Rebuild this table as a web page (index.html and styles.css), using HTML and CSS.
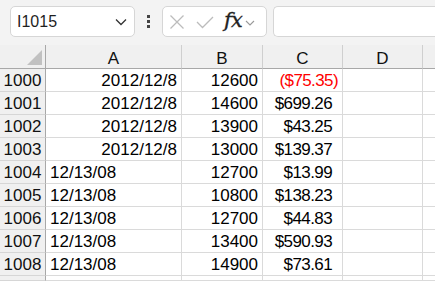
FILE: index.html
```html
<!DOCTYPE html>
<html>
<head>
<meta charset="utf-8">
<link rel="stylesheet" href="styles.css">
</head>
<body>
<div class="toolbar">
  <div class="namebox">
    <span class="name">I1015</span>
    <svg class="chev" width="12" height="8" viewBox="0 0 12 8"><path d="M1 1.5 L6 6.5 L11 1.5" fill="none" stroke="#333" stroke-width="1.3"/></svg>
  </div>
  <div class="dots"><span></span><span></span><span></span></div>
  <div class="fbox">
    <svg class="ico" width="16" height="16" viewBox="0 0 16 16"><path d="M1.5 1.5 L14.5 14.5 M14.5 1.5 L1.5 14.5" stroke="#bcbcbc" stroke-width="1.3" fill="none"/></svg>
    <svg class="ico" width="18" height="14" viewBox="0 0 18 14"><path d="M1 7 L6.5 12.5 L17 2" stroke="#bcbcbc" stroke-width="1.3" fill="none"/></svg>
    <span class="fx">fx</span>
    <svg class="chev2" width="10" height="6" viewBox="0 0 10 6"><path d="M1 1 L5 5 L9 1" fill="none" stroke="#999" stroke-width="1.1"/></svg>
  </div>
  <div class="finput"></div>
</div>
<div class="sheet">
  <div class="ch corner"><div class="tri"></div></div>
  <div class="ch">A</div><div class="ch">B</div><div class="ch">C</div><div class="ch">D</div><div class="ch last"></div>

  <div class="rh">1000</div><div class="c r">2012/12/8</div><div class="c r">12600</div><div class="c r cur neg">($75.35)</div><div class="c"></div><div class="c last"></div>
  <div class="rh">1001</div><div class="c r">2012/12/8</div><div class="c r">14600</div><div class="c r cur">$699.26</div><div class="c"></div><div class="c last"></div>
  <div class="rh">1002</div><div class="c r">2012/12/8</div><div class="c r">13900</div><div class="c r cur">$43.25</div><div class="c"></div><div class="c last"></div>
  <div class="rh">1003</div><div class="c r">2012/12/8</div><div class="c r">13000</div><div class="c r cur">$139.37</div><div class="c"></div><div class="c last"></div>
  <div class="rh">1004</div><div class="c">12/13/08</div><div class="c r">12700</div><div class="c r cur">$13.99</div><div class="c"></div><div class="c last"></div>
  <div class="rh">1005</div><div class="c">12/13/08</div><div class="c r">10800</div><div class="c r cur">$138.23</div><div class="c"></div><div class="c last"></div>
  <div class="rh">1006</div><div class="c">12/13/08</div><div class="c r">12700</div><div class="c r cur">$44.83</div><div class="c"></div><div class="c last"></div>
  <div class="rh">1007</div><div class="c">12/13/08</div><div class="c r">13400</div><div class="c r cur">$590.93</div><div class="c"></div><div class="c last"></div>
  <div class="rh">1008</div><div class="c">12/13/08</div><div class="c r">14900</div><div class="c r cur">$73.61</div><div class="c"></div><div class="c last"></div>
  <div class="rh"></div><div class="c"></div><div class="c"></div><div class="c"></div><div class="c"></div><div class="c last"></div>
</div>
</body>
</html>
```
FILE: styles.css
```css
* { box-sizing: border-box; }
html, body { margin: 0; padding: 0; background: #fff; overflow: hidden; }
body { width: 435px; height: 281px; font-family: "Liberation Sans", Arial, sans-serif; color: #000; }

.toolbar {
  height: 45px;
  background: #f3f3f3;
  display: flex;
  align-items: flex-start;
  padding: 6px 0 0 10px;
}
.namebox {
  width: 125px;
  height: 31px;
  background: #fff;
  border: 1px solid #d6d6d6;
  border-radius: 5px;
  display: flex;
  align-items: center;
  justify-content: space-between;
  padding: 0 7px 0 6px;
}
.name { font-size: 16px; color: #1f1f1f; }
.chev { margin-top: 1px; }
.dots {
  width: 27px;
  height: 31px;
  display: flex;
  flex-direction: column;
  align-items: center;
  justify-content: center;
  gap: 2px;
}
.dots span { width: 3px; height: 3px; background: #444; display: block; }
.fbox {
  width: 105px;
  height: 31px;
  background: #fff;
  border: 1px solid #d6d6d6;
  border-radius: 5px;
  display: flex;
  align-items: center;
  padding: 0 0 0 6px;
}
.fbox .ico:first-child { margin-right: 11px; }
.fbox .ico:nth-child(2) { margin-right: 10px; }
.fx {
  font-family: "DejaVu Serif", "Liberation Serif", serif;
  font-style: italic;
  font-size: 21px;
  color: #222;
  margin-right: 3px;
  margin-top: -3px;
  letter-spacing: -0.8px;
  -webkit-text-stroke: 0.3px #222;
}
.chev2 { margin-top: 2px; }
.finput {
  flex: 1;
  margin-left: 6px;
  height: 31px;
  background: #fff;
  border: 1px solid #d6d6d6;
  border-right: none;
  border-radius: 5px 0 0 5px;
}

.sheet {
  display: grid;
  grid-template-columns: 46px 136px 81px 80px 80px 1fr;
  grid-template-rows: 24px repeat(9, 23px) 5px;
}
.ch {
  background: #f0f0f0;
  border-right: 1px solid #cfcfcf;
  border-bottom: 1px solid #a8a8a8;
  font-size: 17px;
  text-align: center;
  line-height: 23px;
  padding-top: 2px;
  color: #111;
}
.ch.last { border-right: none; }
.corner { position: relative; border-right: 1px solid #a8a8a8; }
.tri {
  position: absolute;
  right: 3px;
  bottom: 3px;
  width: 0; height: 0;
  border-left: 15px solid transparent;
  border-bottom: 15px solid #c1c1c1;
}
.rh {
  background: #f0f0f0;
  border-right: 1px solid #a8a8a8;
  border-bottom: 1px solid #d6d6d6;
  font-size: 17px;
  line-height: 22px;
  padding-top: 1px;
  text-align: center;
  color: #111;
  overflow: hidden;
}
.c {
  border-right: 1px solid #dadada;
  border-bottom: 1px solid #dadada;
  font-size: 17px;
  line-height: 22px;
  padding: 1px 4px 0 4px;
  white-space: nowrap;
  overflow: hidden;
}
.c.last { border-right: none; }
.r { text-align: right; }
.cur { padding-right: 10px; letter-spacing: -0.6px; }
.cur.neg { color: #ff0000; padding-right: 4px; }
```
